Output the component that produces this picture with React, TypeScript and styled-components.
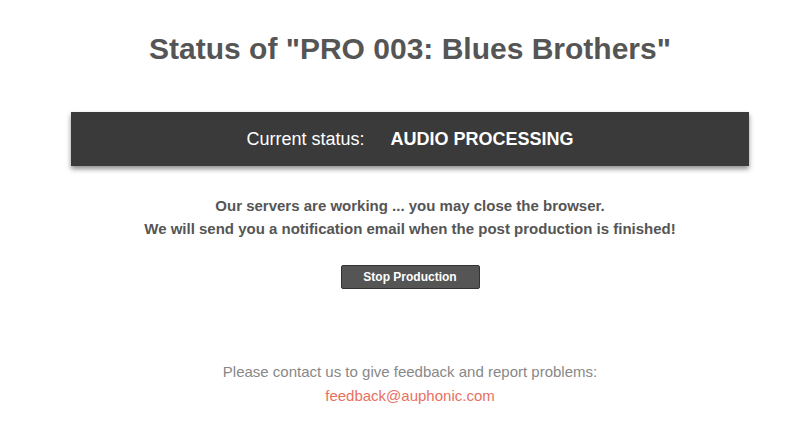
import React from "react";
import styled, { createGlobalStyle } from "styled-components";

const Global = createGlobalStyle`
  html, body { margin: 0; padding: 0; background: #fff; }
  body { font-family: "Liberation Sans", Arial, Helvetica, sans-serif; }
`;

const Page = styled.div`
  width: 678px;
  margin-left: 71px;
  display: flex;
  flex-direction: column;
  align-items: center;
  text-align: center;
`;

const Title = styled.h1`
  margin: 31px 0 0;
  font-size: 30px;
  line-height: 36px;
  font-weight: 700;
  color: #555;
`;

const StatusBar = styled.div`
  align-self: stretch;
  margin-top: 45px;
  height: 54px;
  background: #3a3a3a;
  box-shadow: 0 3px 5px rgba(0, 0, 0, 0.45);
  display: flex;
  align-items: center;
  justify-content: center;
  gap: 26px;
  color: #fff;
  font-size: 18px;
`;

const StatusLabel = styled.span`
  font-weight: 400;
`;

const StatusValue = styled.span`
  font-weight: 700;
`;

const Message = styled.p`
  margin: 28px 0 0;
  font-size: 15px;
  line-height: 23px;
  font-weight: 700;
  color: #555;
`;

const StopButton = styled.button`
  margin-top: 25px;
  width: 139px;
  height: 24px;
  padding: 0;
  background: #555;
  border: 1px solid #333;
  border-radius: 2px;
  color: #fff;
  font-family: "Liberation Sans", Arial, sans-serif;
  font-size: 12px;
  font-weight: 700;
  cursor: pointer;
`;

const Footer = styled.p`
  margin: 71px 0 0;
  font-size: 15px;
  line-height: 23px;
  color: #888;
`;

const Mail = styled.a`
  display: inline-block;
  margin-top: 1px;
  color: #e8705f;
  text-decoration: none;
`;

export default function App() {
  return (
    <>
      <Global />
      <Page>
        <Title>Status of "PRO 003: Blues Brothers"</Title>
        <StatusBar>
          <StatusLabel>Current status:</StatusLabel>
          <StatusValue>AUDIO PROCESSING</StatusValue>
        </StatusBar>
        <Message>
          Our servers are working ... you may close the browser.
          <br />
          We will send you a notification email when the post production is finished!
        </Message>
        <StopButton>Stop Production</StopButton>
        <Footer>
          Please contact us to give feedback and report problems:
          <br />
          <Mail href="mailto:feedback@auphonic.com">feedback@auphonic.com</Mail>
        </Footer>
      </Page>
    </>
  );
}
